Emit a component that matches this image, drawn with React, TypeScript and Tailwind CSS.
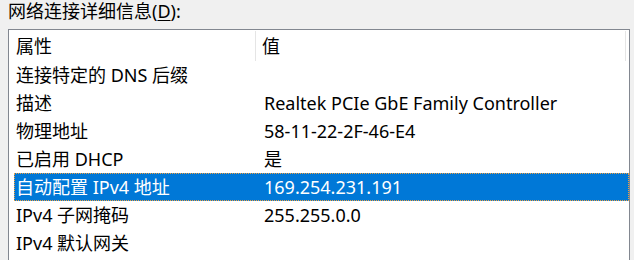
import React from "react";

const rows: [string, string][] = [
  ["连接特定的 DNS 后缀", ""],
  ["描述", "Realtek PCIe GbE Family Controller"],
  ["物理地址", "58-11-22-2F-46-E4"],
  ["已启用 DHCP", "是"],
  ["自动配置 IPv4 地址", "169.254.231.191"],
  ["IPv4 子网掩码", "255.255.0.0"],
  ["IPv4 默认网关", ""],
];

export default function App() {
  return (
    <div
      className="w-[634px] h-[260px] overflow-hidden bg-[#f0f0f0] text-black text-[18px] leading-[22px]"
      style={{ fontFamily: '"Noto Sans", "Noto Sans CJK SC", sans-serif' }}
    >
      <div className="pl-[8px] pt-[0px] h-[29px]">
        网络连接详细信息(<span className="underline underline-offset-2">D</span>):
      </div>
      <div className="ml-[8px] w-[622px] h-[240px] border border-[#828790] bg-white">
        <div className="flex h-[31px] pt-[1px]">
          <div className="w-[247px] pl-[7px] pt-[4px] border-r border-[#e5e5e5]">属性</div>
          <div className="w-[370px] pl-[6px] pt-[4px] border-r border-[#e5e5e5]">值</div>
        </div>
        {rows.map(([k, v], i) => {
          const sel = i === 4;
          return (
            <div
              key={i}
              className={
                sel
                  ? "ml-[5px] flex h-[28px] items-center bg-[#0078d7] text-white border border-dotted border-[#f0a040]"
                  : "ml-[5px] flex h-[28px] items-center border border-transparent"
              }
            >
              <div className="w-[241px] pl-[1px] whitespace-nowrap">{k}</div>
              <div className="pl-[8px] whitespace-nowrap">{v}</div>
            </div>
          );
        })}
      </div>
    </div>
  );
}
